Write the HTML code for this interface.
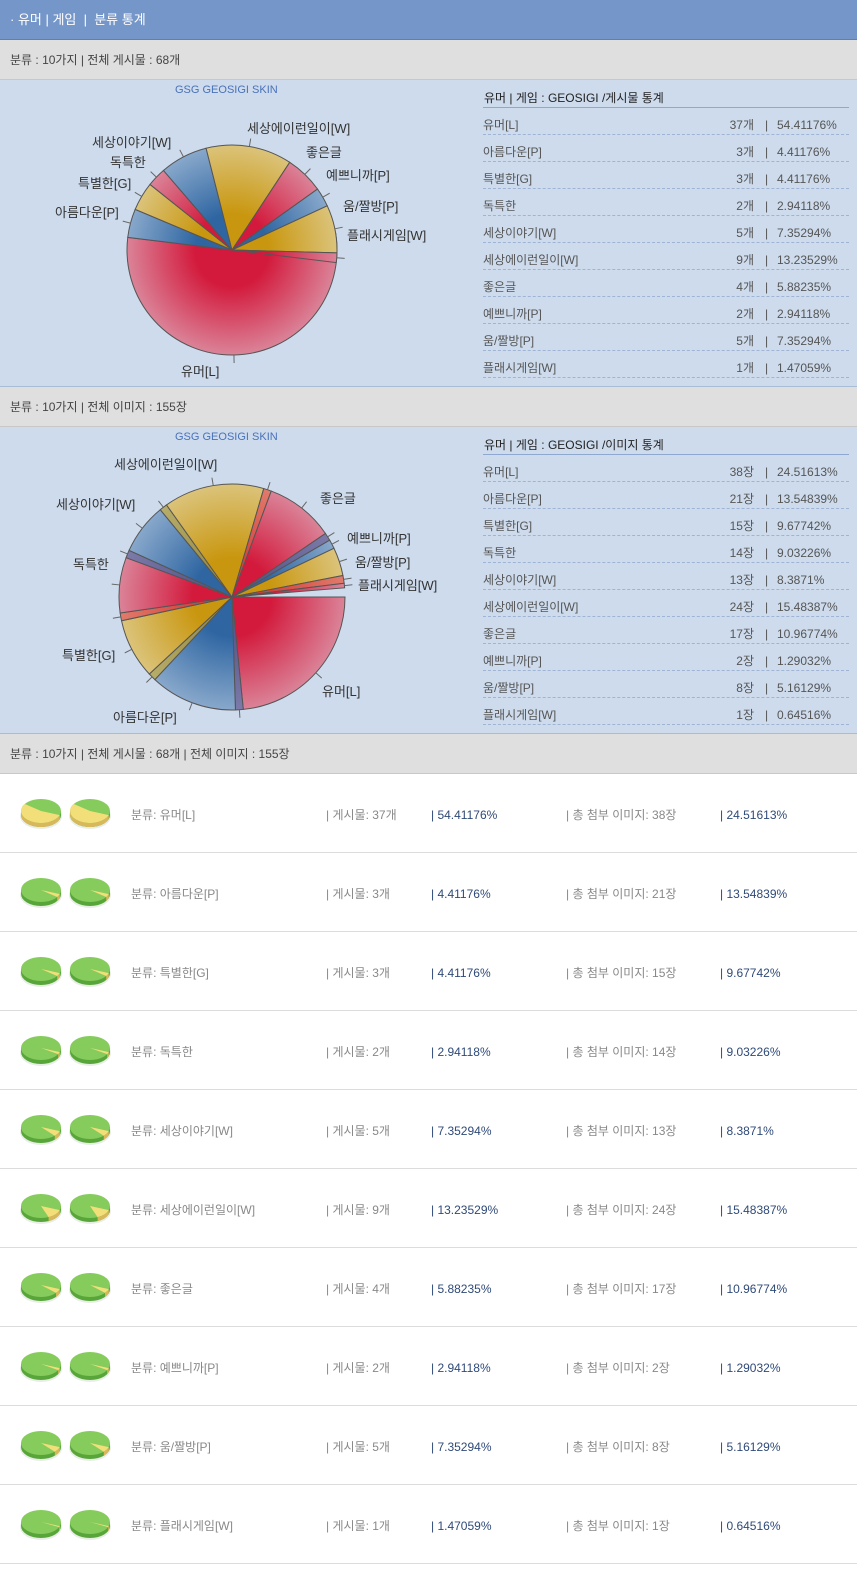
<!DOCTYPE html>
<html><head><meta charset="utf-8">
<style>
*{margin:0;padding:0;box-sizing:border-box}
body{width:857px;height:1569px;background:#fff;font-family:"Liberation Sans","Noto Sans CJK KR","NanumGothic",sans-serif;font-size:12px;color:#555;position:relative;overflow:hidden}
.abs{position:absolute}
#hdr{left:0;top:0;width:857px;height:40px;background:#7596c9;border-bottom:1px solid #5d7fb5;color:#fff;font-size:13px;line-height:40px;padding-left:10px}
.bar{left:0;width:857px;height:40px;background:#dfdfdf;border-bottom:1px solid #c8c8c8;line-height:40px;padding-left:10px;color:#444;font-size:12px}
.panel{left:0;width:857px;background:#cddbec;border-bottom:1px solid #a8bcd6}
.lbl{position:absolute;font-size:13px;color:#333;line-height:16px;white-space:nowrap}
.ttl{position:absolute;font-size:11px;color:#4a72b8;left:175px}
.tbl{position:absolute;left:483px;width:366px}
.tbl .h{height:28px;border-bottom:1px solid #8ea8d0;font-size:12px;color:#222;line-height:36px;padding-left:1px}
.tbl .r{height:27px;border-bottom:1px dashed #9fb4d4;font-size:12px;color:#555;line-height:34px;position:relative}
.tbl .r .n{position:absolute;right:95px;top:0}
.tbl .r .s{position:absolute;left:282px;top:0}
.tbl .r .p{position:absolute;left:294px;top:0}
.row{position:absolute;left:0;width:857px;height:79px;border-bottom:1px solid #dcdcdc;font-size:12px;color:#888}
.row span{position:absolute;top:32px;white-space:nowrap}
.row .c1{left:131px}.row .c2{left:326px}.row .c3{left:431px;color:#2f4a78;top:34px}.row .c4{left:566px}.row .c5{left:720px;color:#2f4a78;top:34px}
.row svg{position:absolute;left:18px;top:20px}
</style></head><body>
<div id="hdr" class="abs">· 유머 | 게임 &nbsp;| &nbsp;분류 통계</div>
<div class="abs bar" style="top:40px">분류 : 10가지 | 전체 게시물 : 68개</div>
<div class="abs panel" style="top:80px;height:307px">
<div class="ttl" style="top:4px">GSG GEOSIGI SKIN</div>
<svg id="pie1" class="abs" style="left:0;top:0" width="470" height="306"></svg>
<span class="lbl" style="left:247px;top:41px">세상에이런일이[W]</span>
<span class="lbl" style="left:92px;top:55px">세상이야기[W]</span>
<span class="lbl" style="left:306px;top:65px">좋은글</span>
<span class="lbl" style="left:110px;top:75px">독특한</span>
<span class="lbl" style="left:326px;top:88px">예쁘니까[P]</span>
<span class="lbl" style="left:78px;top:96px">특별한[G]</span>
<span class="lbl" style="left:343px;top:119px">움/짤방[P]</span>
<span class="lbl" style="left:55px;top:125px">아름다운[P]</span>
<span class="lbl" style="left:347px;top:148px">플래시게임[W]</span>
<span class="lbl" style="left:181px;top:284px">유머[L]</span>
<div class="tbl" style="top:0">
<div class="h">유머 | 게임 : GEOSIGI /게시물 통계</div>
<div class="r">유머[L]<span class="n">37개</span><span class="s">|</span><span class="p">54.41176%</span></div>
<div class="r">아름다운[P]<span class="n">3개</span><span class="s">|</span><span class="p">4.41176%</span></div>
<div class="r">특별한[G]<span class="n">3개</span><span class="s">|</span><span class="p">4.41176%</span></div>
<div class="r">독특한<span class="n">2개</span><span class="s">|</span><span class="p">2.94118%</span></div>
<div class="r">세상이야기[W]<span class="n">5개</span><span class="s">|</span><span class="p">7.35294%</span></div>
<div class="r">세상에이런일이[W]<span class="n">9개</span><span class="s">|</span><span class="p">13.23529%</span></div>
<div class="r">좋은글<span class="n">4개</span><span class="s">|</span><span class="p">5.88235%</span></div>
<div class="r">예쁘니까[P]<span class="n">2개</span><span class="s">|</span><span class="p">2.94118%</span></div>
<div class="r">움/짤방[P]<span class="n">5개</span><span class="s">|</span><span class="p">7.35294%</span></div>
<div class="r">플래시게임[W]<span class="n">1개</span><span class="s">|</span><span class="p">1.47059%</span></div>
</div>
</div>
<div class="abs bar" style="top:387px">분류 : 10가지 | 전체 이미지 : 155장</div>
<div class="abs panel" style="top:427px;height:307px">
<div class="ttl" style="top:4px">GSG GEOSIGI SKIN</div>
<svg id="pie2" class="abs" style="left:0;top:0" width="470" height="306"></svg>
<span class="lbl" style="left:114px;top:30px">세상에이런일이[W]</span>
<span class="lbl" style="left:56px;top:70px">세상이야기[W]</span>
<span class="lbl" style="left:320px;top:64px">좋은글</span>
<span class="lbl" style="left:347px;top:104px">예쁘니까[P]</span>
<span class="lbl" style="left:355px;top:128px">움/짤방[P]</span>
<span class="lbl" style="left:358px;top:151px">플래시게임[W]</span>
<span class="lbl" style="left:73px;top:130px">독특한</span>
<span class="lbl" style="left:62px;top:221px">특별한[G]</span>
<span class="lbl" style="left:322px;top:257px">유머[L]</span>
<span class="lbl" style="left:113px;top:283px">아름다운[P]</span>
<div class="tbl" style="top:0">
<div class="h">유머 | 게임 : GEOSIGI /이미지 통계</div>
<div class="r">유머[L]<span class="n">38장</span><span class="s">|</span><span class="p">24.51613%</span></div>
<div class="r">아름다운[P]<span class="n">21장</span><span class="s">|</span><span class="p">13.54839%</span></div>
<div class="r">특별한[G]<span class="n">15장</span><span class="s">|</span><span class="p">9.67742%</span></div>
<div class="r">독특한<span class="n">14장</span><span class="s">|</span><span class="p">9.03226%</span></div>
<div class="r">세상이야기[W]<span class="n">13장</span><span class="s">|</span><span class="p">8.3871%</span></div>
<div class="r">세상에이런일이[W]<span class="n">24장</span><span class="s">|</span><span class="p">15.48387%</span></div>
<div class="r">좋은글<span class="n">17장</span><span class="s">|</span><span class="p">10.96774%</span></div>
<div class="r">예쁘니까[P]<span class="n">2장</span><span class="s">|</span><span class="p">1.29032%</span></div>
<div class="r">움/짤방[P]<span class="n">8장</span><span class="s">|</span><span class="p">5.16129%</span></div>
<div class="r">플래시게임[W]<span class="n">1장</span><span class="s">|</span><span class="p">0.64516%</span></div>
</div>
</div>
<div class="abs bar" style="top:734px">분류 : 10가지 | 전체 게시물 : 68개 | 전체 이미지 : 155장</div>

<div class="row" style="top:774px"><svg width="100" height="40"></svg><span class="c1">분류: 유머[L]</span><span class="c2">| 게시물: 37개</span><span class="c3">| 54.41176%</span><span class="c4">| 총 첨부 이미지: 38장</span><span class="c5">| 24.51613%</span></div>
<div class="row" style="top:853px"><svg width="100" height="40"></svg><span class="c1">분류: 아름다운[P]</span><span class="c2">| 게시물: 3개</span><span class="c3">| 4.41176%</span><span class="c4">| 총 첨부 이미지: 21장</span><span class="c5">| 13.54839%</span></div>
<div class="row" style="top:932px"><svg width="100" height="40"></svg><span class="c1">분류: 특별한[G]</span><span class="c2">| 게시물: 3개</span><span class="c3">| 4.41176%</span><span class="c4">| 총 첨부 이미지: 15장</span><span class="c5">| 9.67742%</span></div>
<div class="row" style="top:1011px"><svg width="100" height="40"></svg><span class="c1">분류: 독특한</span><span class="c2">| 게시물: 2개</span><span class="c3">| 2.94118%</span><span class="c4">| 총 첨부 이미지: 14장</span><span class="c5">| 9.03226%</span></div>
<div class="row" style="top:1090px"><svg width="100" height="40"></svg><span class="c1">분류: 세상이야기[W]</span><span class="c2">| 게시물: 5개</span><span class="c3">| 7.35294%</span><span class="c4">| 총 첨부 이미지: 13장</span><span class="c5">| 8.3871%</span></div>
<div class="row" style="top:1169px"><svg width="100" height="40"></svg><span class="c1">분류: 세상에이런일이[W]</span><span class="c2">| 게시물: 9개</span><span class="c3">| 13.23529%</span><span class="c4">| 총 첨부 이미지: 24장</span><span class="c5">| 15.48387%</span></div>
<div class="row" style="top:1248px"><svg width="100" height="40"></svg><span class="c1">분류: 좋은글</span><span class="c2">| 게시물: 4개</span><span class="c3">| 5.88235%</span><span class="c4">| 총 첨부 이미지: 17장</span><span class="c5">| 10.96774%</span></div>
<div class="row" style="top:1327px"><svg width="100" height="40"></svg><span class="c1">분류: 예쁘니까[P]</span><span class="c2">| 게시물: 2개</span><span class="c3">| 2.94118%</span><span class="c4">| 총 첨부 이미지: 2장</span><span class="c5">| 1.29032%</span></div>
<div class="row" style="top:1406px"><svg width="100" height="40"></svg><span class="c1">분류: 움/짤방[P]</span><span class="c2">| 게시물: 5개</span><span class="c3">| 7.35294%</span><span class="c4">| 총 첨부 이미지: 8장</span><span class="c5">| 5.16129%</span></div>
<div class="row" style="top:1485px"><svg width="100" height="40"></svg><span class="c1">분류: 플래시게임[W]</span><span class="c2">| 게시물: 1개</span><span class="c3">| 1.47059%</span><span class="c4">| 총 첨부 이미지: 1장</span><span class="c5">| 0.64516%</span></div>

<script>
var NS="http://www.w3.org/2000/svg";
function el(t,a){var e=document.createElementNS(NS,t);for(var k in a)e.setAttribute(k,a[k]);return e;}
function wedge(cx,cy,r,a0,a1){var t0=a0*Math.PI/180,t1=a1*Math.PI/180;
 return "M"+cx+","+cy+"L"+(cx+r*Math.cos(t0))+","+(cy+r*Math.sin(t0))+"A"+r+","+r+" 0 "+((a1-a0)>180?1:0)+" 1 "+(cx+r*Math.cos(t1))+","+(cy+r*Math.sin(t1))+"Z";}
var cols={r:["#d31a3c","#da8398"],b:["#2f66a2","#88a8cb"],g:["#c9970f","#dbc37a"],p:["#5a5a8e","#7c7aa8"],o:["#9a9048","#b7ad6a"],x:["#d6433f","#e07b6b"]};
function defs(svg,cx,cy,r,id){var d=el("defs",{});for(var k in cols){var g=el("radialGradient",{id:id+k,gradientUnits:"userSpaceOnUse",cx:cx,cy:cy,r:r});
 g.appendChild(el("stop",{offset:"0.35","stop-color":cols[k][0]}));g.appendChild(el("stop",{offset:"1","stop-color":cols[k][1]}));d.appendChild(g);}svg.appendChild(d);}
function pie(id,cx,cy,r,start,slices){var svg=document.getElementById(id);defs(svg,cx,cy,r,id);var a=start;
 slices.forEach(function(s){var a1=a+s[0];svg.appendChild(el("path",{d:wedge(cx,cy,r,a,a1),fill:"url(#"+id+s[1]+")",stroke:"#555","stroke-width":"1"}));
  var m=(a+a1)/2*Math.PI/180;svg.appendChild(el("line",{x1:cx+r*Math.cos(m),y1:cy+r*Math.sin(m),x2:cx+(r+8)*Math.cos(m),y2:cy+(r+8)*Math.sin(m),stroke:"#666"}));a=a1;});}
var p1=[54.41176,4.41176,4.41176,2.94118,7.35294,13.23529,5.88235,2.94118,7.35294,1.47059];
var c1=["r","b","g","r","b","g","r","b","g","r"];
pie("pie1",232,170,105,-9,p1.map(function(p,i){return [p*3.6,c1[i]];}));
var p2=[24.51613,13.54839,9.67742,9.03226,8.3871,15.48387,10.96774,1.29032,5.16129,0.64516];
var thin=["p","o","x","p","o","x","p","x","x","x"];
var s2=[];p2.forEach(function(p,i){var d=p*3.6;if(d>8){s2.push([d-4,c1[i]]);s2.push([4,thin[i]]);}else s2.push([d,c1[i]]);});
pie("pie2",232,170,113,0,s2);
function mini(svg,ox,p){var cx=ox+21,cy=17,rx=20,ry=12,h=4;
 svg.appendChild(el("ellipse",{cx:cx,cy:cy+h+1,rx:rx+1,ry:ry+1,fill:"#e8eee6"}));
 svg.appendChild(el("path",{d:"M"+(cx-rx)+","+cy+"v"+h+"A"+rx+","+ry+" 0 0 0 "+(cx+rx)+","+(cy+h)+"v-"+h+"Z",fill:"#58a63a"}));
 svg.appendChild(el("ellipse",{cx:cx,cy:cy,rx:rx,ry:ry,fill:"#86cc5c"}));
 var a0=20*Math.PI/180,a1=(20+p*3.6)*Math.PI/180;
 var x0=cx+rx*Math.cos(a0),y0=cy+ry*Math.sin(a0),x1=cx+rx*Math.cos(a1),y1=cy+ry*Math.sin(a1);
 svg.appendChild(el("path",{d:"M"+cx+","+cy+"L"+x0+","+y0+"A"+rx+","+ry+" 0 "+(p>50?1:0)+" 1 "+x1+","+y1+"Z",fill:"#f3df7a"}));
 if(p>20){svg.appendChild(el("path",{d:"M"+x0+","+y0+"A"+rx+","+ry+" 0 0 1 "+(cx-rx)+","+cy+"v"+h+"A"+rx+","+ry+" 0 0 0 "+x0+","+(y0+h)+"Z",fill:"#d8b85a"}));}
 else{svg.appendChild(el("path",{d:"M"+x0+","+y0+"A"+rx+","+ry+" 0 0 1 "+x1+","+y1+"v"+h+"A"+rx+","+ry+" 0 0 0 "+x0+","+(y0+h)+"Z",fill:"#d8b85a"}));}}
var rows=document.querySelectorAll(".row svg");
rows.forEach(function(s,i){mini(s,2,p1[i]);mini(s,51,p1[i]);});
</script>
</body></html>
